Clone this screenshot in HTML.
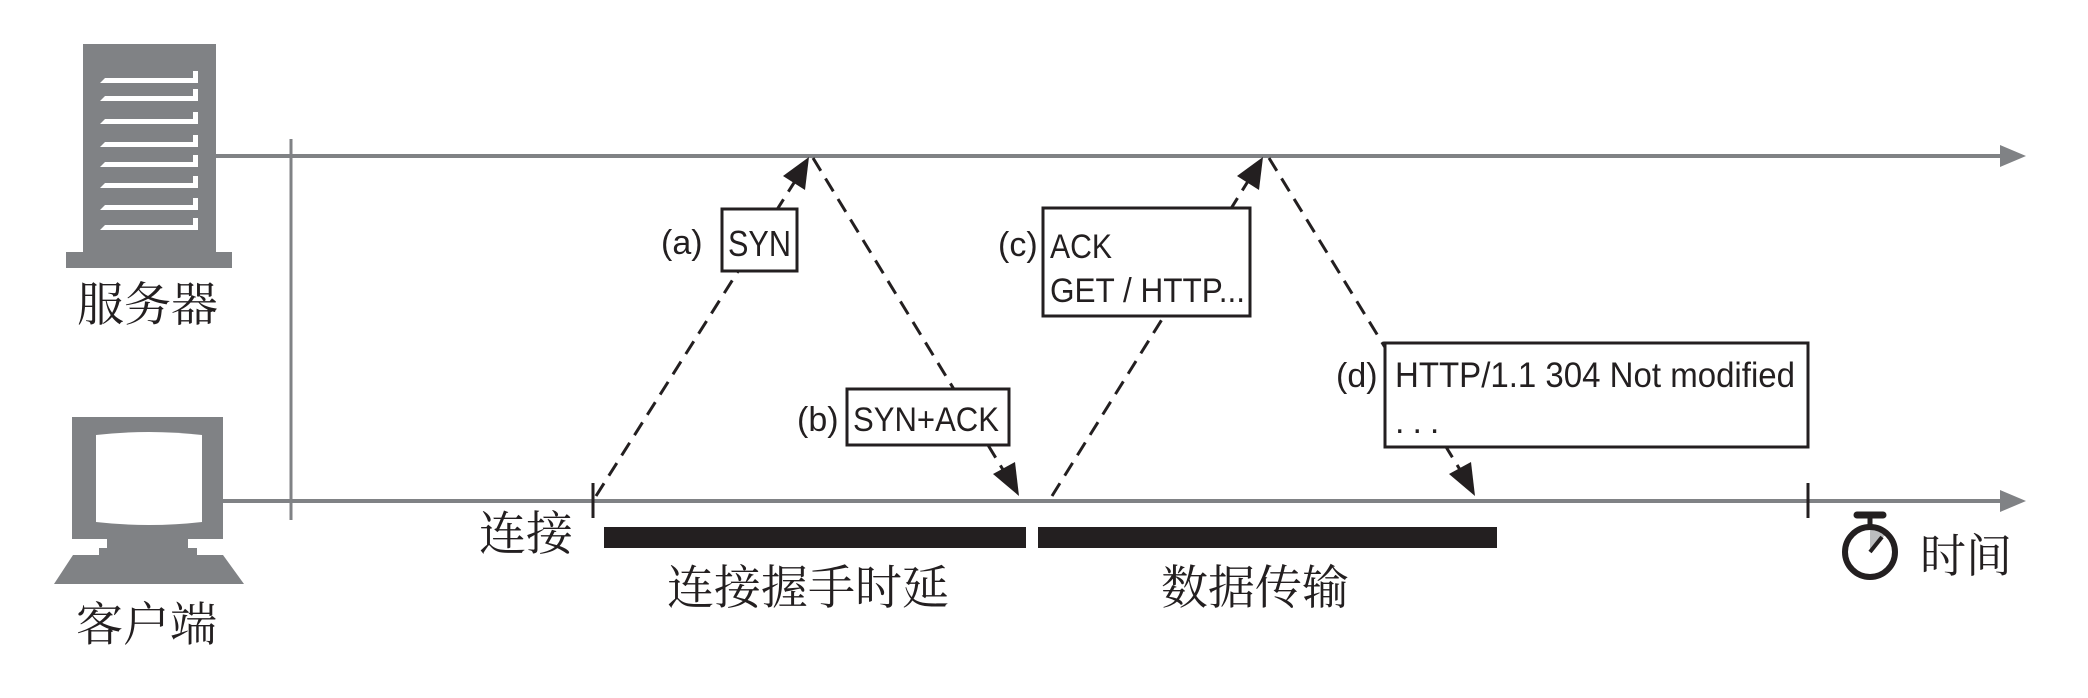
<!DOCTYPE html>
<html><head><meta charset="utf-8"><style>
html,body{margin:0;padding:0;background:#fff;}
svg{display:block}
.cn{font-family:"Liberation Serif","Noto Serif CJK SC",serif;fill:#231f20}
.t{font-family:"Liberation Sans Narrow","Liberation Sans",sans-serif;fill:#231f20}
</style></head><body>
<svg width="2088" height="698" viewBox="0 0 2088 698" xmlns="http://www.w3.org/2000/svg">
<!-- server -->
<rect x="83" y="44" width="133" height="208" fill="#808285"/>
<rect x="66" y="252" width="166" height="16" fill="#808285"/>
<g fill="#fff">
<polygon points="100,83 105,78 193,78 193,71 198,71 198,83"/>
<polygon points="100,101 105,96 193,96 193,89 198,89 198,101"/>
<polygon points="100,124 105,119 193,119 193,112 198,112 198,124"/>
<polygon points="100,147 105,142 193,142 193,135 198,135 198,147"/>
<polygon points="100,167 105,162 193,162 193,155 198,155 198,167"/>
<polygon points="100,188 105,183 193,183 193,176 198,176 198,188"/>
<polygon points="100,210 105,205 193,205 193,198 198,198 198,210"/>
<polygon points="100,230 105,225 193,225 193,218 198,218 198,230"/>
</g>
<text x="77" y="321" class="cn" font-size="47">服务器</text>
<!-- client -->
<rect x="72" y="417" width="151" height="122" fill="#808285"/>
<path d="M96,435 Q149,429 202,435 L202,522 Q149,528 96,522 Z" fill="#fff"/>
<rect x="107" y="539" width="81" height="10" fill="#808285"/>
<rect x="99" y="548" width="98" height="8" fill="#808285"/>
<polygon points="73,555 223,555 244,584 54,584" fill="#808285"/>
<text x="76" y="641" class="cn" font-size="47">客户端</text>
<!-- timelines -->
<line x1="216" y1="156" x2="2002" y2="156" stroke="#808285" stroke-width="4"/>
<polygon points="2000,145 2026,156 2000,167" fill="#808285"/>
<line x1="223" y1="501" x2="2002" y2="501" stroke="#808285" stroke-width="4"/>
<polygon points="2000,490 2026,501 2000,512" fill="#808285"/>
<line x1="291" y1="139" x2="291" y2="520" stroke="#808285" stroke-width="3"/>
<line x1="593" y1="483" x2="593" y2="518" stroke="#231f20" stroke-width="3"/>
<line x1="1808" y1="483" x2="1808" y2="518" stroke="#231f20" stroke-width="3"/>
<!-- dashed lines -->
<g stroke="#231f20" stroke-width="3" stroke-dasharray="15 9" fill="none">
<line x1="596" y1="496" x2="797" y2="178"/>
<line x1="813" y1="158" x2="1005" y2="473"/>
<line x1="1052" y1="496" x2="1250" y2="178"/>
<line x1="1269" y1="158" x2="1462" y2="473"/>
</g>
<g fill="#231f20">
<polygon points="809,157 805,190 783,176"/>
<polygon points="1019,496 993,474 1015,462"/>
<polygon points="1263,157 1259,190 1237,176"/>
<polygon points="1475,496 1449,474 1471,462"/>
</g>
<!-- boxes -->
<g fill="#fff" stroke="#231f20" stroke-width="3">
<rect x="722" y="209" width="75" height="62"/>
<rect x="847" y="389" width="162" height="56"/>
<rect x="1043" y="208" width="207" height="108"/>
<rect x="1385" y="343" width="423" height="104"/>
</g>
<text x="661" y="254" class="t" font-size="34">(a)</text>
<text x="728" y="256" class="t" font-size="36" textLength="63" lengthAdjust="spacingAndGlyphs">SYN</text>
<text x="797" y="431" class="t" font-size="34">(b)</text>
<text x="853" y="431" class="t" font-size="34" textLength="146" lengthAdjust="spacingAndGlyphs">SYN+ACK</text>
<text x="998" y="256" class="t" font-size="34">(c)</text>
<text x="1050" y="258" class="t" font-size="34" textLength="62" lengthAdjust="spacingAndGlyphs">ACK</text>
<text x="1050" y="302" class="t" font-size="34" textLength="195" lengthAdjust="spacingAndGlyphs">GET / HTTP...</text>
<text x="1336" y="387" class="t" font-size="34">(d)</text>
<text x="1395" y="387" class="t" font-size="35" textLength="400" lengthAdjust="spacingAndGlyphs">HTTP/1.1 304 Not modified</text>
<text x="1395" y="433" class="t" font-size="34" letter-spacing="8">...</text>
<!-- bars -->
<rect x="604" y="527" width="422" height="21" fill="#231f20"/>
<rect x="1038" y="527" width="459" height="21" fill="#231f20"/>
<text x="479" y="550" class="cn" font-size="47">连接</text>
<text x="667" y="604" class="cn" font-size="47">连接握手时延</text>
<text x="1161" y="604" class="cn" font-size="47">数据传输</text>
<!-- stopwatch -->
<line x1="1857" y1="515" x2="1883" y2="515" stroke="#231f20" stroke-width="7" stroke-linecap="round"/>
<line x1="1870" y1="515" x2="1870" y2="526" stroke="#231f20" stroke-width="5"/>
<path d="M1870,552 L1870,528 A24,24 0 0 1 1886,534 Z" fill="#bcbec0"/>
<circle cx="1870" cy="552" r="25" fill="none" stroke="#231f20" stroke-width="6"/>
<line x1="1870" y1="552" x2="1882" y2="537" stroke="#231f20" stroke-width="4"/>
<text x="1920" y="572" class="cn" font-size="46">时间</text>
</svg>
</body></html>
